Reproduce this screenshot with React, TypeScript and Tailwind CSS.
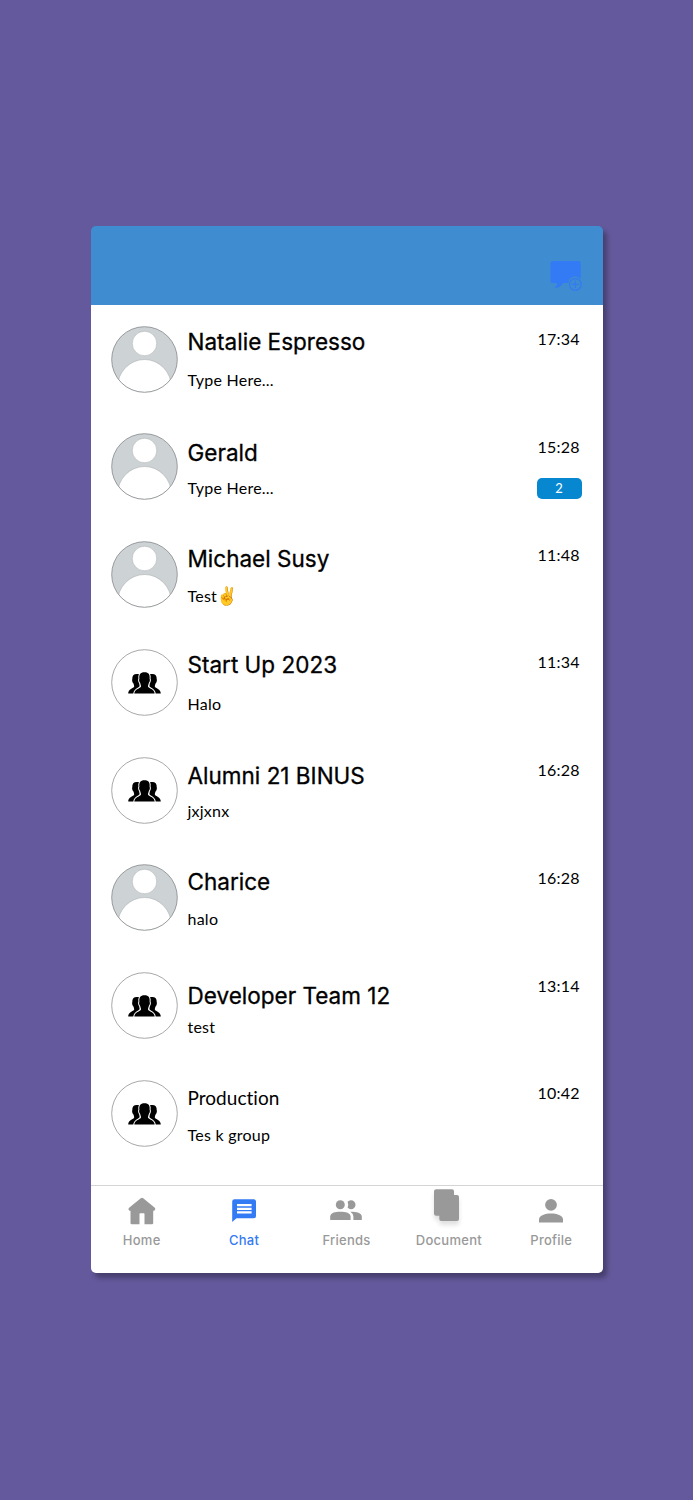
interface Chat {
  name: string;
  message: string;
  time: string;
  emoji?: string;
  group?: boolean;
  unread?: number;
  nameClass: string;
}

const titleFont = "font-['Inter',sans-serif]";

const chats: Chat[] = [
  { name: "Natalie Espresso", message: "Type Here...", time: "17:34", nameClass: "pt-[21px] text-[22.5px]" },
  { name: "Gerald", message: "Type Here...", time: "15:28", unread: 2, nameClass: "pt-[24px] text-[22.5px]" },
  { name: "Michael Susy", message: "Test", emoji: "✌️", time: "11:48", nameClass: "pt-[22px] text-[22.5px]" },
  { name: "Start Up 2023", message: "Halo", time: "11:34", group: true, nameClass: "pt-[21px] text-[22.5px]" },
  { name: "Alumni 21 BINUS", message: "jxjxnx", time: "16:28", group: true, nameClass: "pt-[24px] text-[22.5px]" },
  { name: "Charice", message: "halo", time: "16:28", nameClass: "pt-[22.6px] text-[22.5px]" },
  { name: "Developer Team 12", message: "test", time: "13:14", group: true, nameClass: "pt-[28px] text-[22.5px]" },
  { name: "Production", message: "Tes k group", time: "10:42", group: true, nameClass: "pt-[23px] text-[19px]" },
];

function PersonAvatar() {
  return (
    <svg className="size-[67px] shrink-0" viewBox="0 0 67 67">
      <defs>
        <clipPath id="avatar">
          <circle cx="33.5" cy="33.5" r="32.5" />
        </clipPath>
      </defs>
      <circle cx="33.5" cy="33.5" r="32.8" fill="#cdd2d4" />
      <g clipPath="url(#avatar)" fill="#fff" stroke="#aeb2b4" strokeWidth="0.6">
        <circle cx="33.5" cy="17.5" r="12.3" />
        <ellipse cx="33.5" cy="61.5" rx="27" ry="28" />
      </g>
      <circle cx="33.5" cy="33.5" r="32.8" fill="none" stroke="#85888a" strokeWidth="0.8" />
    </svg>
  );
}

function GroupAvatar() {
  return (
    <svg className="size-[67px] shrink-0" viewBox="0 0 67 67">
      <circle cx="33.5" cy="33.5" r="32.8" fill="#fff" stroke="#929292" strokeWidth="0.8" />
      <path d="M28 25.2C23.5 24.2 21 26 21.3 30C20.8 31 21.3 33.5 22.3 34.2C22.7 35.4 23.2 36.2 23.2 37.5C22.6 39.4 17.2 39.9 17.2 44.5H23C24 40.8 28 40.5 28.6 38.6V25.2Z" />
      <path d="M39 25.2C43.5 24.2 46 26 45.7 30C46.2 31 45.7 33.5 44.7 34.2C44.3 35.4 43.8 36.2 43.8 37.5C44.4 39.4 49.8 39.9 49.8 44.5H44C43 40.8 39 40.5 38.4 38.6V25.2Z" />
      <path
        d="M33.5 23.2C37.8 23.2 39.2 25.8 38.6 29.8C39.3 30.8 38.8 33 37.9 33.7C37.6 35.2 37 36 37 37.4C37.7 39.6 43.3 39.6 43.7 44.5H23.3C23.7 39.6 29.3 39.6 30 37.4C30 36 29.4 35.2 29.1 33.7C28.2 33 27.7 30.8 28.4 29.8C27.8 25.8 29.2 23.2 33.5 23.2Z"
        stroke="#fff"
        strokeWidth="2"
        paintOrder="stroke"
      />
    </svg>
  );
}

function NewChatIcon() {
  return (
    <svg width="32" height="31" viewBox="0 0 32 31">
      <path d="M2.5 1H28.5Q30.7 1 30.7 3.2V19.5A6.7 6.7 0 0 0 18.4 23H13C11.5 26 8.5 28 4.5 28C6.5 26.5 7 25 7 23H2.5Q.5 23 .5 21V3.5Q.5 1 2.5 1Z" fill="#337af5" />
      <g fill="none" stroke="#337af5" strokeWidth="1.2">
        <circle cx="25.3" cy="24.4" r="5.8" />
        <path d="M25.3 20.8V28M21.7 24.4H28.9" />
      </g>
    </svg>
  );
}

const tabs = [
  {
    label: "Home",
    icon: (
      <svg width="28" height="28" viewBox="0 0 28 28" fill="#999">
        <path d="M12.8 1.2Q14 .2 15.2 1.2L26.5 10.5Q28 12 26.5 13.5Q25.8 14 25.2 13.8V26Q25.2 27.3 24 27.3H16.5V17Q16.5 16.3 15.8 16.3H12.2Q11.5 16.3 11.5 17V27.3H3.8Q2.5 27.3 2.5 26V13.8Q1.5 14 1 13.3Q-.2 12 1.4 10.6Z" />
      </svg>
    ),
  },
  {
    label: "Chat",
    icon: (
      <svg width="28" height="28" viewBox="0 0 28 28">
        <path d="M4.5 2.3H23.7Q26 2.3 26 4.6V18.9Q26 21.2 23.7 21.2H6.5L2.2 25V4.6Q2.2 2.3 4.5 2.3Z" fill="#337af5" />
        <path d="M7 8.2H21.6M7 11.8H21.6M7 15.3H21.6" stroke="#fff" strokeWidth="2.2" />
      </svg>
    ),
  },
  {
    label: "Friends",
    icon: (
      <svg width="34" height="28" viewBox="0 0 34 28" fill="#999">
        <circle cx="11.3" cy="7.7" r="4.5" />
        <path d="M1.2 23V19.6C1.2 16 6 14.7 11.3 14.7S21.6 16 21.6 19.6V23Z" />
        <path d="M18.6 4.8A4.5 4.5 0 1 1 18.6 10.6Q19.8 7.7 18.6 4.8Z" />
        <path d="M21.4 14.8C27.5 14.8 32.8 16 32.8 19.6V23H24.4V19.6Q24.4 16.8 21.4 14.8Z" />
      </svg>
    ),
  },
  {
    label: "Document",
    icon: (
      <svg className="-mt-[9px] h-9 w-[34px] shrink-0 overflow-visible drop-shadow-[0_4px_2px_rgba(0,0,0,0.12)]" viewBox="0 0 34 36" fill="#999">
        <path d="M4.2 1.2H20Q22 1.2 22 3.2V6.9H25Q27 6.9 27 8.9V31Q27 33 25 33H9.3Q7.3 33 7.3 31V27.8H4.2Q2 27.8 2 25.8V3.2Q2 1.2 4.2 1.2Z" />
      </svg>
    ),
  },
  {
    label: "Profile",
    icon: (
      <svg width="28" height="28" viewBox="0 0 28 28" fill="#999">
        <circle cx="14" cy="7.8" r="5.9" />
        <path d="M2 25.5V22.3C2 18.3 8.5 16.5 14 16.5S26 18.3 26 22.3V25.5Z" />
      </svg>
    ),
  },
];

function ChatRow({ chat }: { chat: Chat }) {
  return (
    <div className="flex h-[107.75px] shrink-0 pl-5 pr-[21px]">
      <div className="pt-[20.5px]">{chat.group ? <GroupAvatar /> : <PersonAvatar />}</div>
      <div className="ml-[10px] flex h-full flex-1 flex-col justify-between whitespace-nowrap pb-[20.3px]">
        <p
          className={`leading-8 ${chat.name === "Production" ? "font-['Lato',sans-serif] tracking-[0.03px]" : `${titleFont} tracking-[0.01px] [-webkit-text-stroke:0.3px_black]`} ${chat.nameClass}`}
        >
          {chat.name}
        </p>
        <p className="h-6 font-['Lato',sans-serif] text-base leading-6 tracking-[0.24px]">
          {chat.message}
          {chat.emoji && <span className="-ml-px text-[17.5px] leading-none">{chat.emoji}</span>}
        </p>
      </div>
      <div className="flex w-[45px] flex-col pt-6 font-['Lato',sans-serif]">
        <span className="h-5 pl-px text-base leading-5 tracking-[0.25px]">{chat.time}</span>
        {chat.unread && (
          <span className="mt-[21.7px] flex h-[21px] items-center justify-center rounded-[5px] bg-[#0787cf] text-[13px] leading-[21px] text-white">
            {chat.unread}
          </span>
        )}
      </div>
    </div>
  );
}

export default function App() {
  return (
    <div className="flex min-h-[1500px] justify-center bg-[#64599c] pt-[226px] text-black">
      <div className="flex h-[1047px] w-[512px] flex-col rounded-[5px] shadow-[4px_5px_5px_rgba(0,0,0,0.3)]">
        <header className="flex h-[79px] shrink-0 items-start justify-end rounded-t-[5px] bg-[#3f8cd0] pr-[21px] pt-[34px]">
          <NewChatIcon />
        </header>

        <main className="h-[880px] shrink-0 overflow-hidden bg-white">
          {chats.map((chat) => (
            <ChatRow key={chat.name} chat={chat} />
          ))}
        </main>

        <nav className="grid flex-1 grid-cols-5 rounded-b-[5px] border-t border-[#d4d4d4] bg-white pt-[11px]">
          {tabs.map((tab) => (
            <div
              key={tab.label}
              className={`flex flex-col items-center ${titleFont} text-[13px] font-medium tracking-[0.26px] ${tab.label === "Chat" ? "text-[#337af5]" : "text-[#999]"}`}
            >
              <div className="flex h-[33px] items-start justify-center">{tab.icon}</div>
              <span className="leading-5">{tab.label}</span>
            </div>
          ))}
        </nav>
      </div>
    </div>
  );
}
